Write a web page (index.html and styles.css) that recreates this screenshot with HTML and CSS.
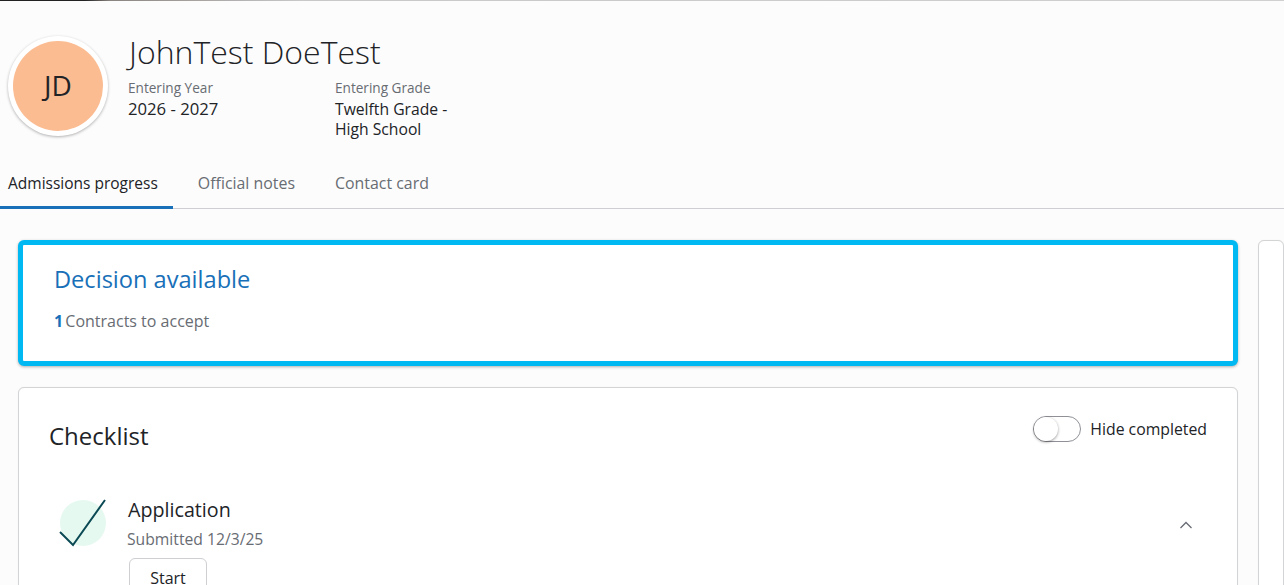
FILE: index.html
```html
<!DOCTYPE html>
<html lang="en">
<head>
    <meta charset="UTF-8">
    <meta name="viewport" content="width=device-width, initial-scale=1.0">
    <title>Admissions progress</title>
    <link rel="stylesheet" href="styles.css">
</head>
<body>
    <div class="top-strip"></div>

    <header class="record">
        <div class="avatar"><span class="avatar-circle">JD</span></div>
        <div class="record-info">
            <h1>JohnTest DoeTest</h1>
            <div class="record-fields">
                <div class="field field-year">
                    <div class="field-label">Entering Year</div>
                    <div class="field-value value-year">2026 - 2027</div>
                </div>
                <div class="field field-grade">
                    <div class="field-label">Entering Grade</div>
                    <div class="field-value">Twelfth Grade - High School</div>
                </div>
            </div>
        </div>
    </header>

    <nav class="tabs">
        <a class="tab active">Admissions progress</a>
        <a class="tab">Official notes</a>
        <a class="tab">Contact card</a>
    </nav>

    <main class="content">
        <div class="main-column">
            <section class="card decision">
                <h2>Decision available</h2>
                <p><b>1</b> Contracts to accept</p>
            </section>

            <section class="card checklist">
                <div class="checklist-head">
                    <h2>Checklist</h2>
                    <div class="hide-toggle">
                        <span class="switch"><span class="knob"></span></span>
                        <span>Hide completed</span>
                    </div>
                </div>
                <div class="item">
                    <svg class="item-icon" width="48" height="50" viewBox="0 0 48 50">
                        <circle cx="24" cy="25" r="23" fill="#e6f9f0"/>
                        <path d="M1 34 L14 47 L46 2" fill="none" stroke="#0b4a55" stroke-width="2"/>
                    </svg>
                    <div class="item-body">
                        <div class="item-title">Application</div>
                        <div class="item-sub">Submitted 12/3/25</div>
                        <button class="btn">Start</button>
                    </div>
                    <svg class="chevron" width="14" height="8" viewBox="0 0 14 8">
                        <path d="M1.5 7 L7 1.5 L12.5 7" fill="none" stroke="#686c73" stroke-width="1.3"/>
                    </svg>
                </div>
            </section>
        </div>
        <aside class="card side"></aside>
    </main>
</body>
</html>
```

FILE: styles.css
```css
html, body {
    height: 585px;
    overflow: hidden;
}
body {
    margin: 0;
    font-family: "Open Sans", "Noto Sans", sans-serif;
    background-color: #fcfcfc;
    color: #212327;
}
.top-strip {
    height: 1px;
    background: linear-gradient(to right, #222 0, #222 85px, #8a8480 110px, #c8c8c8 300px, #d0d0d0 100%);
}

/* record header */
.record {
    display: flex;
    height: 159px;
    box-sizing: border-box;
    padding: 35px 0 0 8px;
}
.avatar {
    width: 100px;
    height: 100px;
    box-sizing: border-box;
    padding: 5px;
    border-radius: 50%;
    background-color: #fff;
    box-shadow: 0 1px 3px rgba(0, 0, 0, 0.3);
}
.avatar-circle {
    display: flex;
    align-items: center;
    justify-content: center;
    width: 90px;
    height: 90px;
    border-radius: 50%;
    background-color: #fbbc92;
    font-size: 28px;
    padding-bottom: 2px;
    box-sizing: border-box;
}
.record-info {
    margin: -2px 0 0 20px;
}
h1 {
    margin: 0;
    padding-left: 1px;
    font-size: 32px;
    font-weight: 300;
    line-height: 36px;
}
.record-fields {
    display: flex;
    margin-top: 9px;
}
.field-year {
    width: 207px;
}
.field-grade {
    width: 125px;
}
.field-label {
    font-size: 13.6px;
    line-height: 18px;
    color: #686c73;
}
.field-value {
    margin-top: 2px;
    font-size: 15.7px;
    line-height: 20px;
}
.value-year {
    font-size: 16.7px;
}

/* tabs */
.tabs {
    display: flex;
    height: 48px;
    border-bottom: 1px solid #cdcfd2;
}
.tab {
    box-sizing: border-box;
    height: 49px;
    padding: 12px 20px 0;
    font-size: 15.9px;
    color: #686c73;
}
.tab.active {
    margin-right: 5px;
    padding: 12px 15px 0 8px;
    font-size: 15.5px;
    color: #212327;
    border-bottom: 3px solid #1870b8;
}

/* cards */
.content {
    display: flex;
    gap: 20px;
    padding: 31px 0 0 18px;
}
.main-column {
    flex: 0 0 1220px;
}
.card {
    box-sizing: border-box;
    background-color: #fff;
    border: 1px solid #d3d4d6;
    border-radius: 6px;
    box-shadow: 0 0 1px rgba(0, 0, 0, 0.1);
}
.decision {
    height: 126px;
    padding: 20px 31px;
    border: 5px solid #00b9f2;
    box-shadow: 0 1px 3px rgba(0, 0, 0, 0.3);
}
.decision h2 {
    margin: 0;
    font-size: 23.6px;
    font-weight: 400;
    line-height: 28px;
    color: #1870b8;
}
.decision p {
    margin: 18px 0 0;
    font-size: 16px;
    line-height: 20px;
    color: #686c73;
}
.decision b {
    margin-right: -2px;
    color: #1870b8;
}
.checklist {
    height: 400px;
    margin-top: 21px;
    padding: 28px 30px;
}
.checklist-head {
    display: flex;
    justify-content: space-between;
}
.checklist-head h2 {
    margin: 4px 0 0;
    font-size: 24px;
    font-weight: 400;
    line-height: 32px;
}
.hide-toggle {
    display: flex;
    align-items: center;
    gap: 9px;
    height: 26px;
    font-size: 15.8px;
}
.switch {
    display: block;
    box-sizing: border-box;
    width: 48px;
    height: 26px;
    border: 1px solid #8f9197;
    border-radius: 13px;
    background-color: #fff;
}
.knob {
    display: block;
    width: 24px;
    height: 24px;
    border-radius: 50%;
    background-color: #fff;
    box-shadow: 0 1px 3px rgba(0, 0, 0, 0.4);
}
.item {
    display: flex;
    margin-top: 46px;
    padding-left: 10px;
}
.item-body {
    flex: 1;
    margin: 0 0 0 21px;
}
.item-title {
    font-size: 19.7px;
    line-height: 24px;
}
.item-sub {
    margin: 7px 0 0 -1px;
    font-size: 15.7px;
    line-height: 20px;
    color: #686c73;
}
.btn {
    display: block;
    width: 78px;
    height: 40px;
    margin: 9px 0 0 1px;
    border: 1px solid #cdcfd2;
    border-radius: 6px;
    background-color: #fff;
    font-family: inherit;
    font-size: 16px;
    color: #212327;
}
.chevron {
    margin: 23px 14px 0 0;
}
.side {
    flex: 1;
    height: 400px;
}
```
